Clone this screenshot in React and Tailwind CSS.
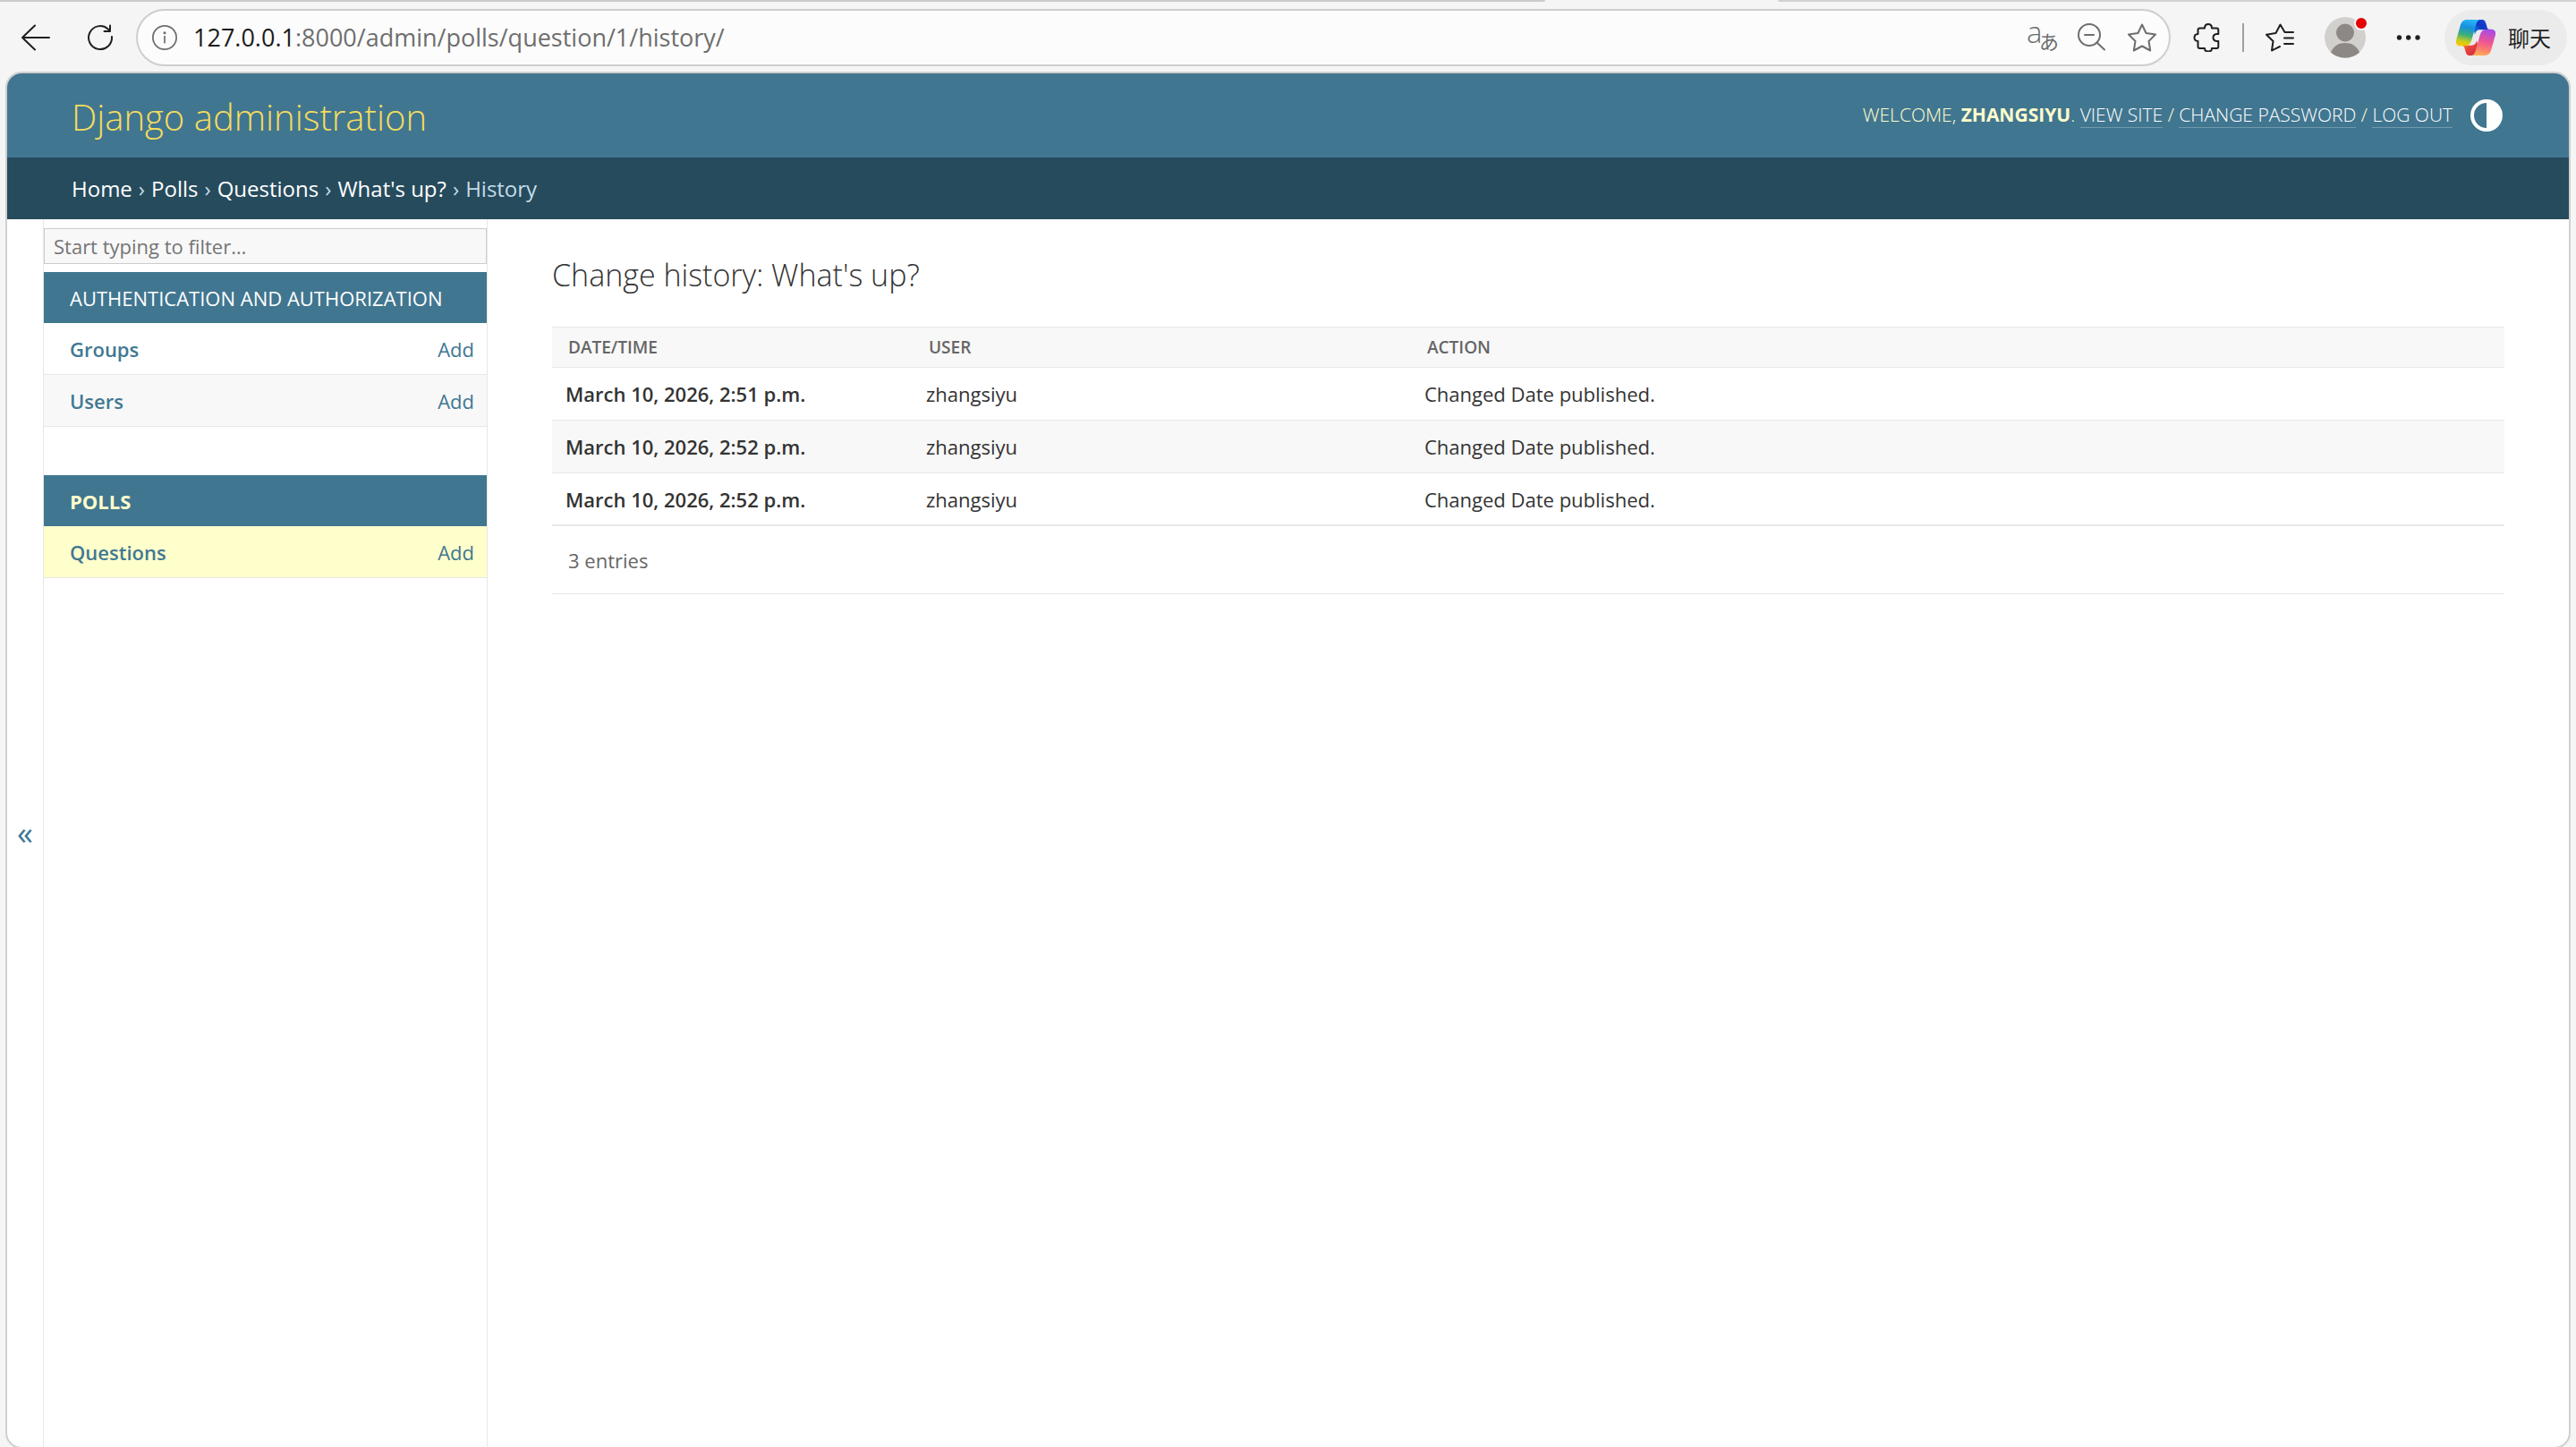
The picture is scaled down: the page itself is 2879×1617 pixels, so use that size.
import { useState } from 'react'
import clsx from 'clsx'

const apps = [
  { name: 'Authentication and Authorization', current: false, models: ['Groups', 'Users'] },
  { name: 'Polls', current: true, models: ['Questions'] },
]

const history = [
  { id: 1, time: 'March 10, 2026, 2:51 p.m.', user: 'zhangsiyu', action: 'Changed Date published.' },
  { id: 2, time: 'March 10, 2026, 2:52 p.m.', user: 'zhangsiyu', action: 'Changed Date published.' },
  { id: 3, time: 'March 10, 2026, 2:52 p.m.', user: 'zhangsiyu', action: 'Changed Date published.' },
]

const crumbs = ['Home', 'Polls', 'Questions', "What's up?"]

function Icon({ children, className = 'size-8' }) {
  return (
    <svg viewBox="0 0 32 32" fill="none" stroke="currentColor" strokeWidth="2" strokeLinecap="round" strokeLinejoin="round" className={clsx('shrink-0 block', className)} aria-hidden="true">
      {children}
    </svg>
  )
}

function CopilotLogo() {
  return (
    <svg viewBox="0 0 132 120" className="w-11 h-10 shrink-0" aria-hidden="true">
      <defs>
        <linearGradient id="cpLeft" x1="0.6" y1="0" x2="0.4" y2="1">
          <stop offset="0" stopColor="#2bb8f7" />
          <stop offset="0.3" stopColor="#1590e0" />
          <stop offset="0.6" stopColor="#3fae7a" />
          <stop offset="0.85" stopColor="#c8cc1e" />
          <stop offset="1" stopColor="#f8c800" />
        </linearGradient>
        <linearGradient id="cpRight" x1="0.6" y1="0" x2="0.4" y2="1">
          <stop offset="0" stopColor="#a64be8" />
          <stop offset="0.45" stopColor="#ee5495" />
          <stop offset="0.75" stopColor="#fb7c70" />
          <stop offset="1" stopColor="#ffac50" />
        </linearGradient>
        <linearGradient id="cpBlue" x1="0" y1="1" x2="1" y2="0">
          <stop offset="0" stopColor="#1596ee" />
          <stop offset="0.5" stopColor="#1237c4" />
          <stop offset="1" stopColor="#1d50dc" />
        </linearGradient>
        <linearGradient id="cpRed" x1="0" y1="0" x2="1" y2="1">
          <stop offset="0" stopColor="#fb8a3c" />
          <stop offset="0.5" stopColor="#e8433c" />
          <stop offset="1" stopColor="#c8284c" />
        </linearGradient>
      </defs>
      <path fill="url(#cpBlue)" d="M62 0H86C96 0 98 6 101 15L104 26C106 32 110 34 117 34H80C70 34 66 40 63 50L56 20Z" />
      <path fill="url(#cpRed)" d="M70 120H46C36 120 34 114 31 105L28 94C26 88 22 86 15 86H52C62 86 66 80 69 70L76 100Z" />
      <path fill="url(#cpLeft)" d="M36 0H84C74 0 70 6 67 16L52 68C48 81 42 87 30 88H14C2 88 -3 79 1 66L14 20C18 6 25 0 36 0Z" />
      <path fill="url(#cpRight)" d="M96 120H48C58 120 62 114 65 104L80 52C84 39 90 33 102 32H118C130 32 135 41 131 54L118 100C114 114 107 120 96 120Z" />
    </svg>
  )
}

function BrowserBar() {
  const [focused, setFocused] = useState(false)

  return (
    <div className="shrink-0">
      {/* bottom edge of the tab strip, open under the active tab */}
      <div className="flex h-[2px]">
        <div className="w-[60%] bg-[#cbcbcb] rounded-br-full" />
        <div className="w-[9%]" />
        <div className="flex-1 bg-[#d2d2d2] rounded-bl-full" />
      </div>
      <div className="flex items-center pt-2 pb-[6px] pl-6 pr-[10px] text-[#1f1f1f]">
        <button aria-label="Back" className="mr-10">
          <Icon>
            <path d="M31 16H1M15 2.5L1 16L15 29.5" />
          </Icon>
        </button>
        <button aria-label="Refresh" className="mr-6">
          <Icon>
            <path d="M29 15A13 13 0 1 1 24.5 6.2L27 8.5M27 2.5V9H20.500" />
          </Icon>
        </button>

        <div
          onFocus={() => setFocused(true)}
          onBlur={() => setFocused(false)}
          className={clsx('flex flex-1 items-center h-16 rounded-full border-2 bg-[#fcfcfc] pl-4 pr-[14px] text-[#6e6e6e]', focused ? 'border-[#0067c0]' : 'border-[#cecece]')}
        >
          <button aria-label="View site information">
            <Icon className="size-7">
              <circle cx="16" cy="16" r="15" />
              <path d="M16 14.500V22.500" />
              <circle cx="16" cy="10" r="0.800" fill="currentColor" />
            </Icon>
          </button>
          <a href="#address" className="ml-[18px] flex-1 text-[27px] leading-9">
            <span className="text-[#1b1b1b]">127.0.0.1</span>:8000/admin/polls/question/1/history/
          </a>
          <div className="flex gap-6">
            <button aria-label="Translate">
              <svg viewBox="0 0 32 32" className="size-8 block overflow-visible" fill="currentColor" aria-hidden="true">
                <text x="-1" y="22" fontSize="33" className="font-light">a</text>
                <text x="13" y="29" fontSize="22" className="font-['Noto_Sans_CJK_JP',sans-serif]">あ</text>
              </svg>
            </button>
            <button aria-label="Zoom out">
              <Icon>
                <circle cx="13" cy="13" r="12" />
                <path d="M8 13H18M21.500 21.500L30 29.500" />
              </Icon>
            </button>
            <button aria-label="Add to favorites">
              <Icon>
                <path d="M16 1.500L20.500 11L31 12.500L23.500 20L25.200 30.500L16 25.500L6.800 30.500L8.500 20L1 12.500L11.500 11Z" />
              </Icon>
            </button>
          </div>
        </div>

        <button aria-label="Extensions" className="ml-6">
          <Icon>
            <path d="M6.500 7.500Q6.500 5.500 8.500 5.500H14Q14 1 18 1Q22 1 22 5.500H27.500Q29.300 5.500 29.300 7.500V12H27.500Q23.500 12.500 23.500 16Q23.500 19.500 27.500 20H29.300V26Q29.300 28 27.500 28H22Q22 31.500 18 31.500Q14 31.500 14 28H8.500Q6.500 28 6.500 26V20Q2.500 19.800 2.500 16Q2.500 12.200 6.500 12Z" />
          </Icon>
        </button>
        <span className="mx-6 w-[2px] h-8 bg-[#a0a0a0]" />
        <button aria-label="Favorites">
          <Icon>
            <path d="M31 10H21.500L16.500 1.500L11.500 11L1 12.800L8.500 20L7 30.500L16 26M21 16.500H31M21 23H31" />
          </Icon>
        </button>
        <button aria-label="Profile" className="relative ml-[34px] mr-8">
          <svg viewBox="0 0 46 46" className="size-[46px] block" aria-hidden="true">
            <circle cx="23" cy="23" r="23" fill="#d2d0cc" />
            <circle cx="23" cy="17.500" r="10" fill="#8c8885" />
            <path d="M7 39.500C10 32 16 29 23 29S36 32 39 39.500C30 47.500 16 47.500 7 39.500Z" fill="#8c8885" />
          </svg>
          <span className="absolute -top-[1px] -right-[3px] size-4 rounded-full border-2 border-[#f5f5f5] bg-[#e60000]" />
        </button>
        <button aria-label="Settings and more">
          <Icon>
            <g fill="currentColor" stroke="none">
              <circle cx="5.500" cy="16" r="2.700" />
              <circle cx="15.700" cy="16" r="2.700" />
              <circle cx="26" cy="16" r="2.700" />
            </g>
          </Icon>
        </button>
        <button className="ml-6 flex items-center gap-[14px] h-[62px] pl-[13px] pr-[18px] rounded-full bg-[#ebebeb] text-2xl font-['Noto_Sans_CJK_SC',sans-serif]">
          <CopilotLogo />
          聊天
        </button>
      </div>
    </div>
  )
}

function HeaderLink({ children }) {
  return (
    <a href="#user" className="text-white border-b border-white/25">{children}</a>
  )
}

function Header() {
  return (
    <>
      <header className="flex items-center justify-between h-[94px] pl-[72px] pr-[74px] bg-[#417690] text-[#ffffcc]">
        <a href="#home" className="pt-1 text-[40px] leading-[52px] font-light text-[#f5dd5d]">Django administration</a>
        <div className="flex items-center gap-5 text-[21px] leading-6 font-light uppercase">
          <div className="pb-[2px]">
            Welcome, <strong className="font-bold">zhangsiyu</strong>. <HeaderLink>View site</HeaderLink> / <HeaderLink>Change password</HeaderLink> / <HeaderLink>Log out</HeaderLink>
          </div>
          <button aria-label="Toggle theme">
            <svg viewBox="0 0 36 36" className="size-9 block" aria-hidden="true">
              <circle cx="18" cy="18" r="16" fill="none" stroke="#fff" strokeWidth="4" />
              <path d="M18 2A16 16 0 0 1 18 34Z" fill="#fff" />
            </svg>
          </button>
        </div>
      </header>
      <nav aria-label="Breadcrumbs" className="flex items-center gap-[7px] h-[69px] px-[72px] bg-[#264b5d] text-[#c4dce8] text-2xl">
        {crumbs.map((crumb) => (
          <span key={crumb} className="flex gap-[7px]">
            <a href="#crumb" className="text-white">{crumb}</a>
            <span>›</span>
          </span>
        ))}
        <span>History</span>
      </nav>
    </>
  )
}

function Sidebar() {
  const [filter, setFilter] = useState('')
  const query = filter.trim().toLowerCase()

  return (
    <nav aria-label="Sidebar" className="w-[497px] shrink-0 border-x border-[#e8e8e8] pt-[10px]">
      <input
        type="search"
        aria-label="Filter navigation items"
        placeholder="Start typing to filter…"
        value={filter}
        onChange={(e) => setFilter(e.target.value)}
        className="block w-full h-10 px-[10px] mb-[9px] border border-[#ccc] bg-[#f8f8f8] text-[#333] placeholder:text-[#757575]"
      />
      {apps.map((app) => (
        <table key={app.name} className="w-full mb-[54px] border-separate border-spacing-0">
          <caption className={clsx('h-[57px] px-[29px] bg-[#417690] text-left uppercase leading-[58px]', app.current ? 'font-bold text-[#ffffcc]' : 'text-white')}>
            <a href="#app">{app.name}</a>
          </caption>
          <tbody>
            {app.models.filter((m) => m.toLowerCase().includes(query)).map((model) => (
              <tr key={model} className={app.current ? 'bg-[#ffffcc]' : 'even:bg-[#f8f8f8]'}>
                <th scope="row" className="h-[58px] pl-[29px] border-b border-[#e8e8e8] text-left font-semibold text-[#417893]">
                  <a href="#model">{model}</a>
                </th>
                <td className="pr-[14px] border-b border-[#e8e8e8] text-right text-[#417893]">
                  <a href="#add">Add</a>
                </td>
              </tr>
            ))}
          </tbody>
        </table>
      ))}
    </nav>
  )
}

function HistoryTable() {
  return (
    <>
      <table className="w-full border-separate border-spacing-0 text-left">
        <thead>
          <tr className="bg-[#f8f8f8] text-[19px] leading-6 uppercase text-[#666]">
            {['Date/time', 'User', 'Action'].map((label) => (
              <th key={label} scope="col" className="h-[46px] px-[18px] border-y border-[#e8e8e8] font-semibold">{label}</th>
            ))}
          </tr>
        </thead>
        <tbody>
          {history.map((entry) => (
            <tr key={entry.id} className="group even:bg-[#f8f8f8]">
              <th scope="row" className="w-[403px] h-[59px] px-[15px] border-b group-last:border-b-2 border-[#e8e8e8] font-semibold">{entry.time}</th>
              <td className="w-[557px] px-[15px] border-b group-last:border-b-2 border-[#e8e8e8]">{entry.user}</td>
              <td className="px-[15px] border-b group-last:border-b-2 border-[#e8e8e8]">{entry.action}</td>
            </tr>
          ))}
        </tbody>
      </table>
      <p className="flex items-center h-[76px] px-[18px] border-b border-[#e8e8e8] text-[#666]">
        {history.length} entries
      </p>
    </>
  )
}

export default function App() {
  const [showSidebar, setShowSidebar] = useState(true)

  return (
    <div className="flex flex-col min-h-screen overflow-hidden bg-[#f5f5f5] font-['Open_Sans','Noto_Sans',sans-serif] text-[22px] leading-8 text-[#333]">
      <BrowserBar />
      <div className="flex flex-col flex-1 mx-[6px] -mb-[2px] border-2 border-[#cfcfcf] rounded-[18px] bg-white overflow-hidden">
        <Header />
        <div className="flex flex-1">
          <button
            aria-label="Toggle navigation"
            onClick={() => setShowSidebar((prev) => !prev)}
            className="w-10 shrink-0 text-[36px] text-[#417893]"
          >
            {showSidebar ? '«' : '»'}
          </button>
          {showSidebar && <Sidebar />}
          <main className="flex-1 min-w-0 px-[72px] pt-[38px]">
            <h1 className="mb-[34px] text-[34px] leading-[48px] font-light">Change history: What's up?</h1>
            <HistoryTable />
          </main>
        </div>
      </div>
    </div>
  )
}
